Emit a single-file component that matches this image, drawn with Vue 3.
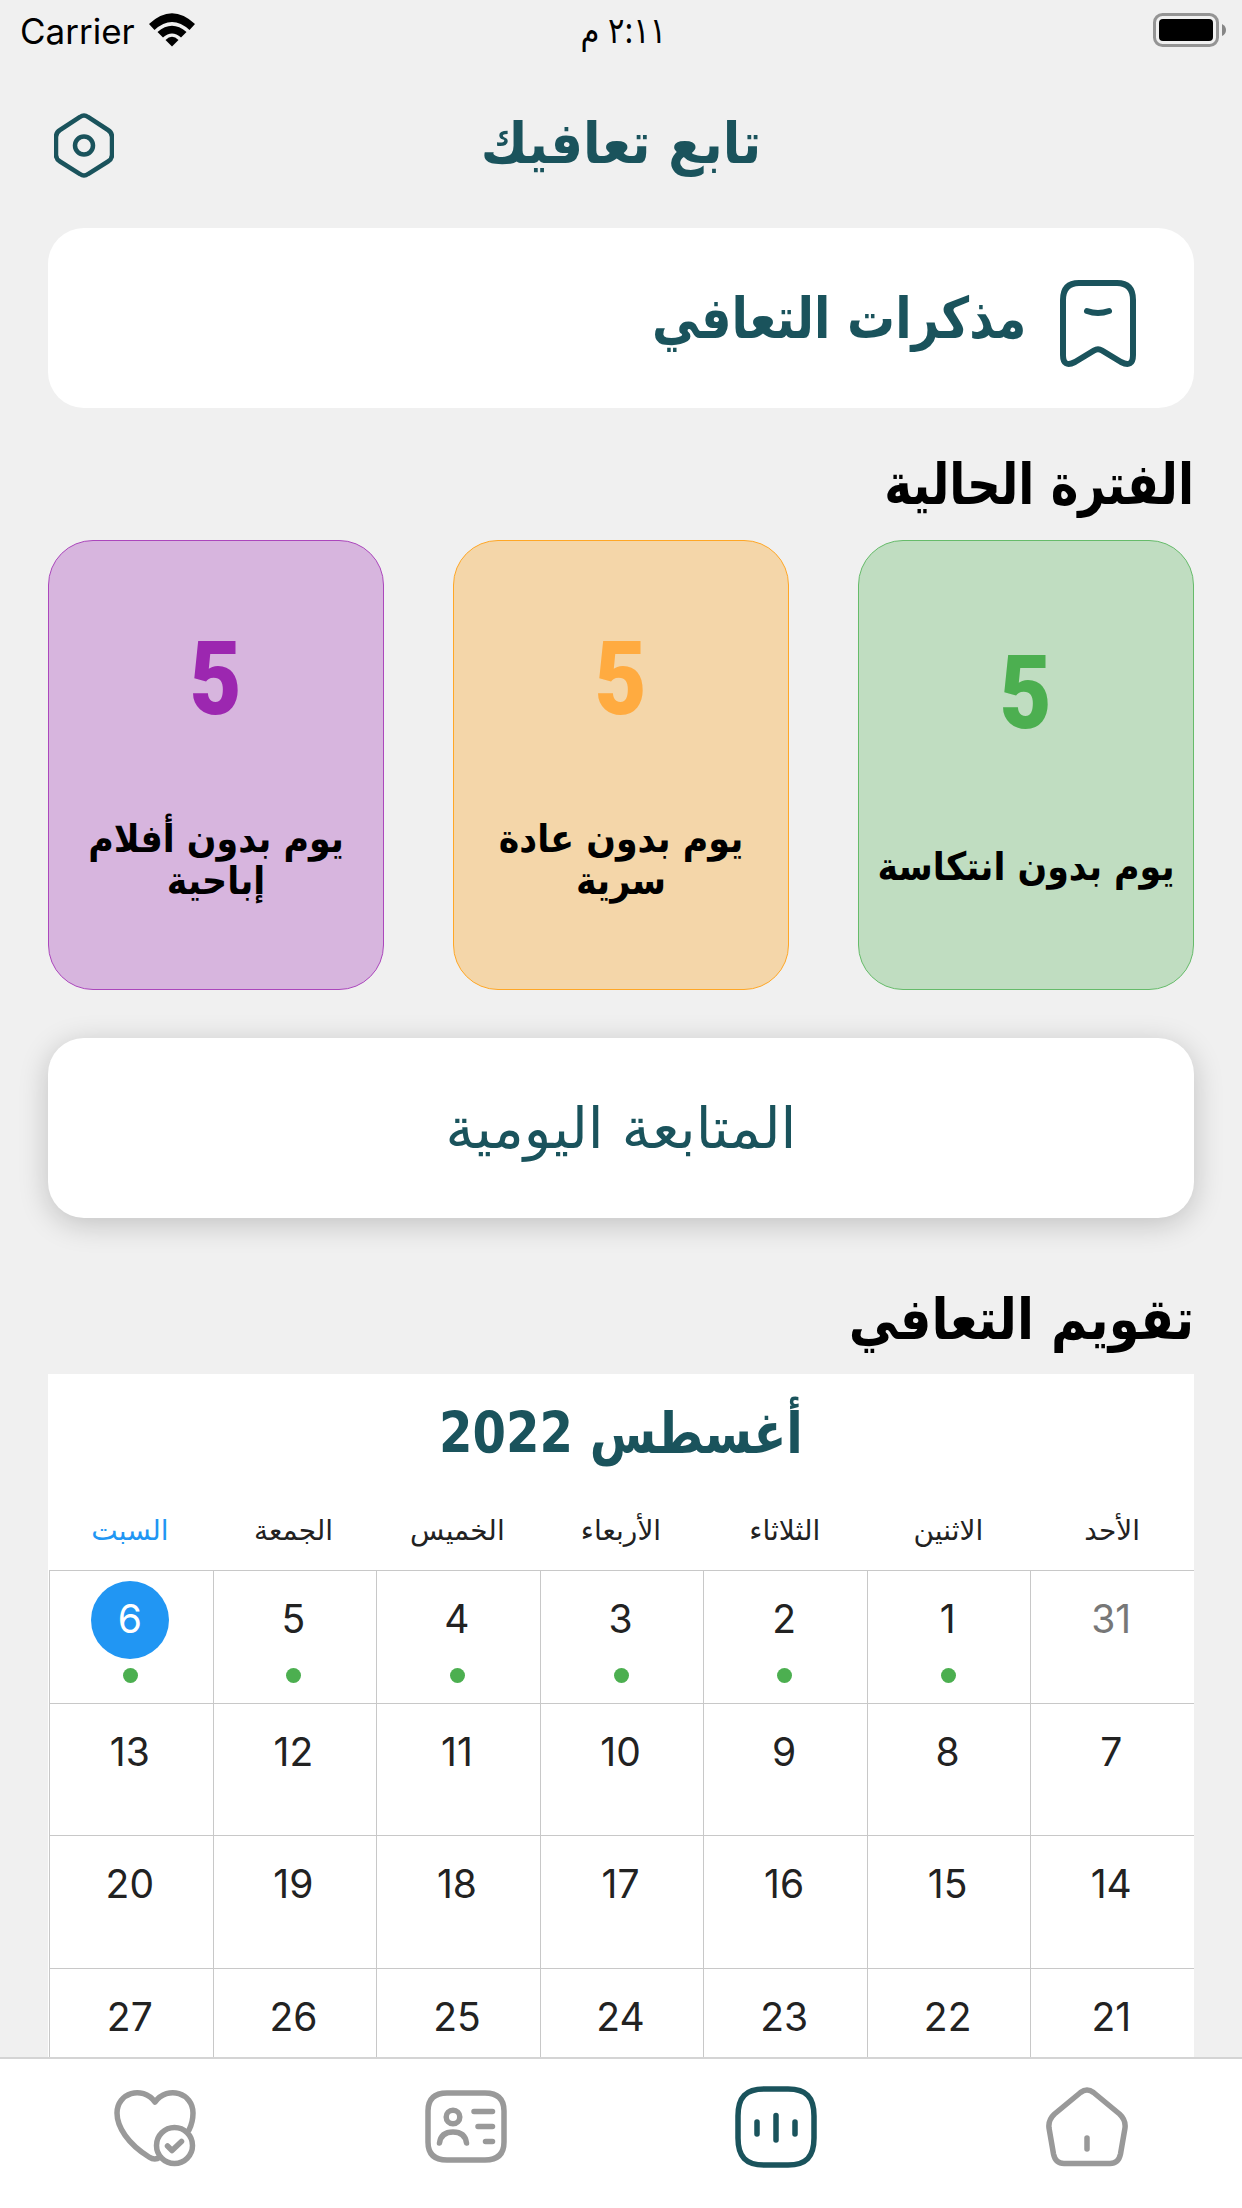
<template>
  <div class="screen" dir="rtl">
    <header class="status-bar" dir="ltr">
      <div class="carrier">
        <span>Carrier</span>
        <svg width="46" height="34" viewBox="0 0 46 34">
          <path d="M0 11 Q23 -10.500 46 11 L40.500 17 Q23 1 5.500 17 Z" fill="#000" />
          <path d="M8.500 19 Q23 6.500 37.500 19 L32 24.500 Q23 16.500 14 24.500 Z" fill="#000" />
          <path d="M16.500 27 Q23 20.500 29.500 27 L23 33.500 Z" fill="#000" />
        </svg>
      </div>
      <span class="clock" dir="rtl">٢:١١ م</span>
      <svg class="battery" width="74" height="34" viewBox="0 0 74 34">
        <rect x="1.500" y="1.500" width="63" height="31" rx="8" fill="none" stroke="#949494" stroke-width="3" />
        <rect x="6" y="6" width="54" height="22" rx="4" fill="#000" />
        <path d="M69 11 Q73 13 73 17 Q73 21 69 23 Z" fill="#868686" />
      </svg>
    </header>

    <div class="title-bar">
      <h1><span>تابع تعافيك</span></h1>
      <svg class="settings" width="60" height="66" viewBox="0 0 60 66" fill="none" stroke="#1a535c">
        <path d="M26 4 Q30 1 34 4 L54 17 Q58 19.500 58 24 V42 Q58 46 54 48.500 L34 61 Q30 64 26 61 L6 48.500 Q2 46 2 42 V24 Q2 19.500 6 17 Z" stroke-width="4.500" />
        <circle cx="30" cy="32.500" r="9" stroke-width="4.500" />
      </svg>
    </div>

    <main>
      <div class="card diary">
        <svg width="76" height="87" viewBox="0 0 76 87" fill="none" stroke="#1a535c" stroke-linecap="round" stroke-linejoin="round">
          <path d="M3 20 Q3 3 19 3 H57 Q73 3 73 20 V75 Q73 88 61 82 L42 70.500 Q38 68 34 70.500 L15 82 Q3 88 3 75 Z" stroke-width="6" />
          <path d="M27 31 Q38 35 49 31" stroke-width="6" />
        </svg>
        <span class="diary-label">مذكرات التعافي</span>
      </div>

      <h2 class="section-title"><span>الفترة الحالية</span></h2>
      <div class="stats">
        <div v-for="stat in stats" :key="stat.tone" class="stat" :class="stat.tone">
          <strong>{{ stat.days }}</strong>
          <p><span v-for="line in stat.lines" :key="line">{{ line }}</span></p>
        </div>
      </div>

      <div class="card follow-up"><span>المتابعة اليومية</span></div>

      <h2 class="section-title calendar-title"><span>تقويم التعافي</span></h2>
      <section class="calendar">
        <h3><span>أغسطس 2022</span></h3>
        <div class="weekdays">
          <span v-for="(day, i) in weekdays" :key="day" :class="{ today: i === 6 }">{{ day }}</span>
        </div>
        <div class="days">
          <div v-for="(day, i) in days" :key="i" class="day" :class="{ muted: i === 0, selected: i === 6 }">
            <span class="number">{{ day }}</span>
            <i v-if="i > 0 && i < 7" class="dot"></i>
          </div>
        </div>
      </section>
    </main>

    <nav class="tab-bar">
      <a>
        <svg width="82" height="82" viewBox="0 0 82 82" class="icon">
          <path d="M34.500 6.500 Q41 1.500 47.500 6.500 L73.500 28 Q80 34 79 42 L74.500 68 Q72.500 77.500 64 77.500 H18 Q9.500 77.500 7.500 68 L3 42 Q2 34 8.500 28 Z" />
          <path d="M41 52 V63" />
        </svg>
      </a>
      <a class="active">
        <svg width="82" height="82" viewBox="0 0 82 82" class="icon">
          <path d="M29 3 H53 C71 3 79 11 79 30 V52 C79 71 71 79 53 79 H29 C11 79 3 71 3 52 V30 C3 11 11 3 29 3 Z" />
          <path d="M22 36 V48 M41 29.500 V54 M60 36 V48" />
        </svg>
      </a>
      <a>
        <svg width="82" height="82" viewBox="0 0 82 82" class="icon">
          <path d="M22 7 H60 Q79 7 79 25 V56 Q79 74 60 74 H22 Q3 74 3 56 V25 Q3 7 22 7 Z" />
          <circle cx="28" cy="31" r="6.800" />
          <path d="M14.500 57 Q16 46 28 46 T41.500 57 M49 25.500 H67.500 M53 40.500 H67.500 M60.500 55.500 H67.500" />
        </svg>
      </a>
      <a>
        <svg width="82" height="82" viewBox="0 0 82 82" class="icon">
          <path d="M46 71 Q41 75 35 71 C14 58 3 41 3 27 C3 7 28 -1 41 16 C54 -1 79 7 79 27 Q79 36 75 44" />
          <circle cx="60.500" cy="59.500" r="18" />
          <path d="M53.500 60 L58 64.500 L67.500 55.500" />
        </svg>
      </a>
    </nav>
  </div>
</template>

<script setup>
const stats = [
  { tone: 'green', days: 5, lines: ['يوم بدون انتكاسة'] },
  { tone: 'orange', days: 5, lines: ['يوم بدون عادة', 'سرية'] },
  { tone: 'purple', days: 5, lines: ['يوم بدون أفلام', 'إباحية'] }
]

const weekdays = ['الأحد', 'الاثنين', 'الثلاثاء', 'الأربعاء', 'الخميس', 'الجمعة', 'السبت']

const days = [31, ...Array.from({ length: 27 }, (_, i) => i + 1)]
</script>

<style>
body {
  margin: 0;
}
</style>

<style scoped>
.screen {
  display: flex;
  flex-direction: column;
  width: 1242px;
  height: 2208px;
  overflow: hidden;
  background: #f0f0f0;
  color: #000;
  font-family: Inter, 'DejaVu Sans', sans-serif;
}

h1, h2, h3, p {
  margin: 0;
}

h1 span, h2 span, h3 span, p span, .follow-up span, .diary-label {
  display: inline-block;
  white-space: nowrap;
}

h1, h2, h3, p, .card {
  font-family: 'DejaVu Sans Condensed', 'DejaVu Sans', sans-serif;
}

.status-bar {
  display: grid;
  grid-template-columns: 1fr auto 1fr;
  align-items: center;
  height: 60px;
  padding: 0 15px 0 20px;
  font-size: 35px;
  flex: none;
  box-sizing: border-box;
}

.carrier {
  display: flex;
  align-items: center;
  gap: 14px;
}

.carrier span {
  padding-top: 2px;
}

.clock {
  font-size: 36px;
  transform: scaleX(0.85);
}

.battery {
  justify-self: end;
}

.title-bar {
  display: grid;
  grid-template-columns: 1fr auto 1fr;
  align-items: center;
  height: 168px;
  padding: 3px 54px 0;
  flex: none;
  box-sizing: border-box;
  color: #1a535c;
}

h1 {
  grid-column: 2;
  font-size: 57px;
  line-height: 60px;
  padding-bottom: 6px;
}

.settings {
  justify-self: end;
}

main {
  flex: 1;
  min-height: 0;
  overflow: hidden;
  padding: 0 48px;
}

.card {
  display: flex;
  align-items: center;
  height: 180px;
  border-radius: 36px;
  background: #fff;
  color: #1a535c;
  font-size: 57px;
  box-sizing: border-box;
}

.diary {
  gap: 34px;
  padding: 0 58px;
  font-weight: 700;
}

.diary svg {
  margin-top: 11px;
}

.diary-label {
  transform: scaleX(0.933);
  transform-origin: right;
}

.section-title {
  height: 132px;
  line-height: 153px;
  font-size: 57px;
}

.section-title span {
  transform: scaleX(0.914);
  transform-origin: right;
}

.stats {
  display: flex;
  justify-content: space-between;
}

.stat {
  display: flex;
  flex-direction: column;
  align-items: center;
  justify-content: space-evenly;
  width: 336px;
  height: 450px;
  border: 1px solid;
  border-radius: 45px;
  box-sizing: border-box;
}

.stat strong {
  font-family: Roboto, sans-serif;
  font-size: 102px;
  font-weight: 900;
  line-height: 102px;
  transform: scaleX(0.88);
}

.stat p {
  display: flex;
  flex-direction: column;
  align-items: center;
  color: #000;
  font-size: 38.7px;
  font-weight: 700;
  line-height: 42px;
}

.stat.green {
  color: #4caf50;
  border-color: #66bb6a;
  background: #c0ddc1;
}

.stat.orange {
  color: #ffab40;
  border-color: #ffa726;
  background: #f4d6a9;
}

.stat.purple {
  color: #9c27b0;
  border-color: #ab47bc;
  background: #d7b5de;
}

.follow-up {
  justify-content: center;
  margin-top: 48px;
  font-family: 'DejaVu Sans', sans-serif;
  box-shadow: 0 6px 30px rgba(0, 0, 0, 0.2);
}

.calendar-title {
  height: 156px;
  line-height: 203px;
}

.calendar-title span {
  transform: scaleX(0.967);
}

.calendar {
  background: #fff;
}

h3 {
  height: 118px;
  line-height: 118px;
  text-align: center;
  color: #1a535c;
  font-size: 57px;
}

h3 span {
  transform: scaleX(0.938);
}

.weekdays {
  display: grid;
  grid-template-columns: repeat(7, 1fr);
  height: 78px;
  line-height: 78px;
  text-align: center;
  font-family: 'DejaVu Sans', sans-serif;
  font-size: 28px;
  color: #222;
}

.weekdays .today {
  color: #2196f3;
}

.days {
  display: grid;
  grid-template-columns: repeat(7, 1fr);
  grid-auto-rows: 132.6px;
  padding-left: 1px;
}

.day {
  display: flex;
  flex-direction: column;
  align-items: center;
  padding: 10px 2px 0 0;
  border-top: 1px solid #c8c8c8;
  border-left: 1px solid #c8c8c8;
  box-sizing: border-box;
  font-size: 39px;
  color: #222;
}

.number {
  width: 78px;
  height: 78px;
  line-height: 76px;
  padding-right: 1px;
  box-sizing: border-box;
  text-align: center;
  border-radius: 50%;
}

.muted {
  color: #777;
}

.selected .number {
  background: #2196f3;
  color: #fff;
}

.dot {
  width: 15px;
  height: 15px;
  margin-top: 9px;
  border-radius: 50%;
  background: #4caf50;
}

.tab-bar {
  display: grid;
  grid-template-columns: repeat(4, 1fr);
  height: 151px;
  padding-top: 27px;
  border-top: 2px solid #d4d4d4;
  background: #fff;
  box-sizing: border-box;
  flex: none;
  justify-items: center;
  color: #999;
}

.tab-bar .active {
  color: #1a535c;
}

.icon {
  fill: none;
  stroke: currentColor;
  stroke-width: 5.500;
  stroke-linecap: round;
  stroke-linejoin: round;
}
</style>
